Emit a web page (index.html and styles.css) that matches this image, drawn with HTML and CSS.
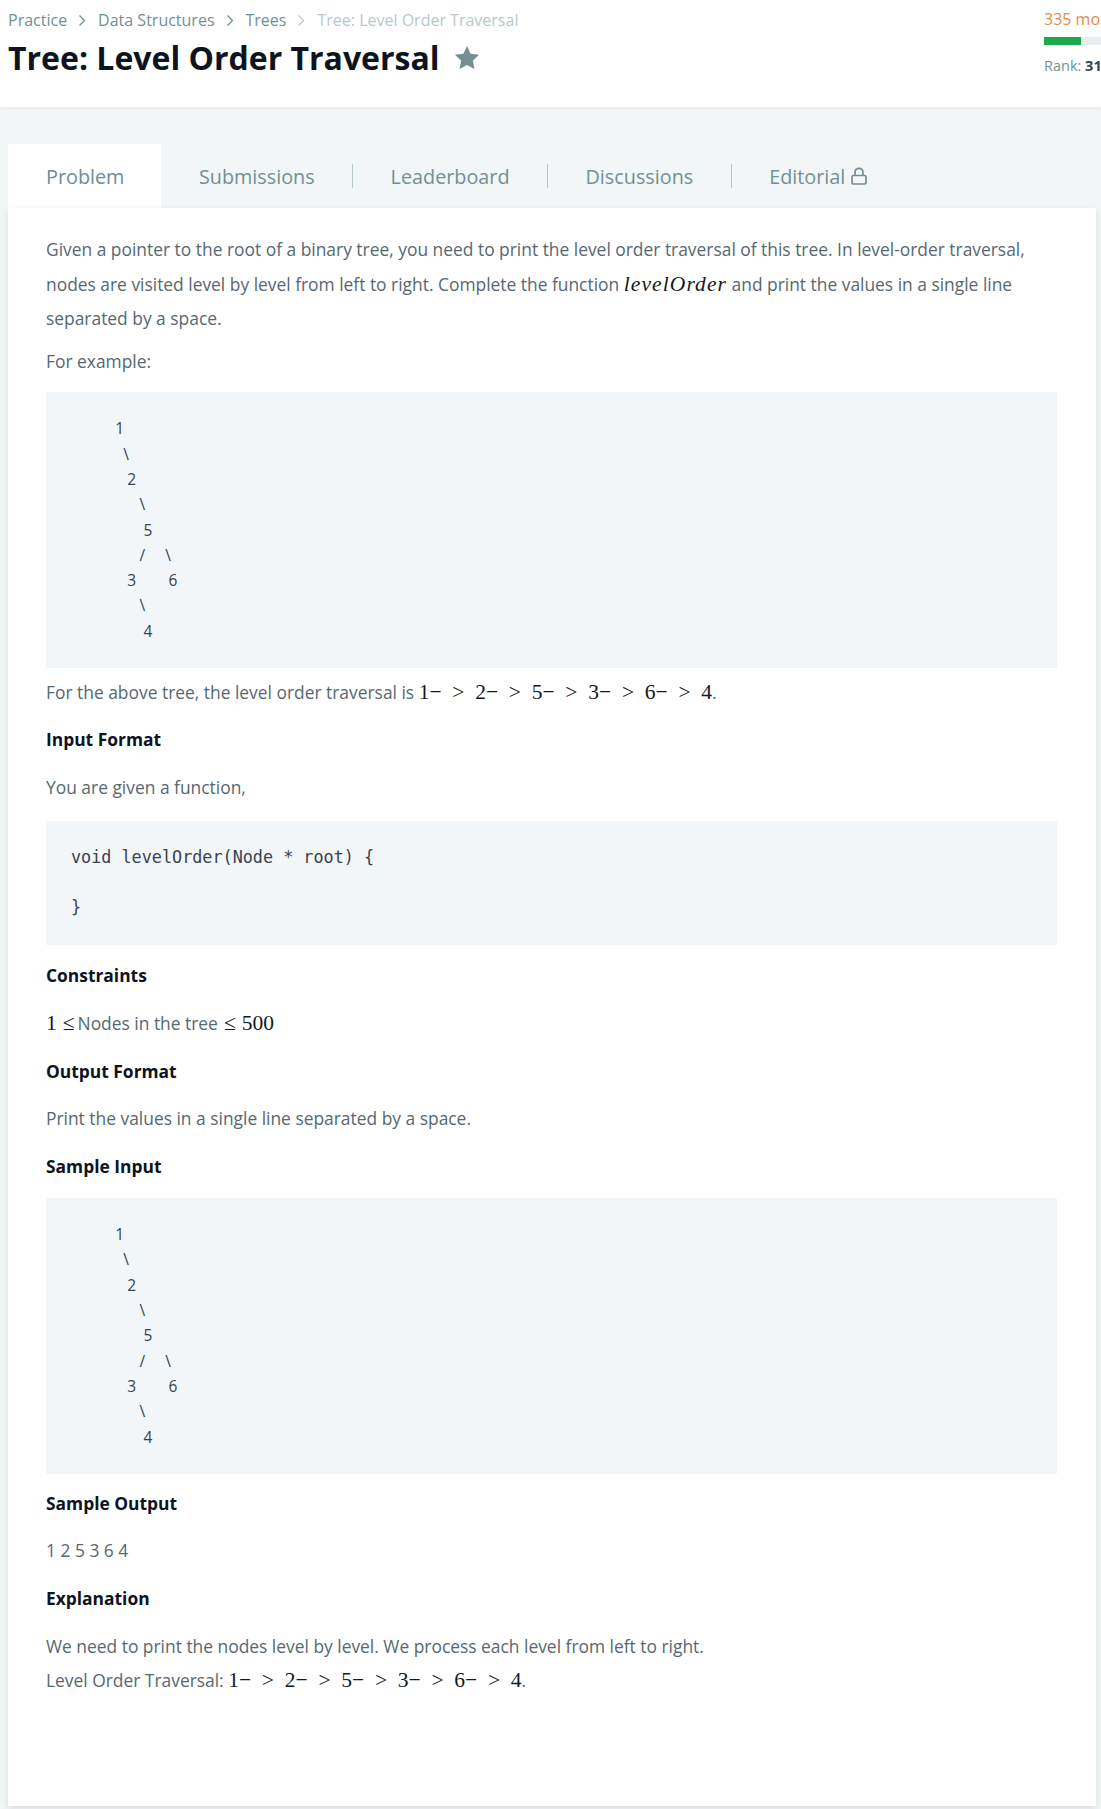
FILE: index.html
```html
<!DOCTYPE html>
<html lang="en">
<head>
<meta charset="utf-8">
<title>Tree: Level Order Traversal</title>
<link rel="stylesheet" href="styles.css">
</head>
<body>
<header class="top">
  <div class="top-left">
    <nav class="crumbs">
      <span>Practice</span>
      <svg class="chev" viewBox="0 0 8 13"><polyline points="1.5,1.5 6.5,6.5 1.5,11.5"/></svg>
      <span>Data Structures</span>
      <svg class="chev" viewBox="0 0 8 13"><polyline points="1.5,1.5 6.5,6.5 1.5,11.5"/></svg>
      <span>Trees</span>
      <svg class="chev chev-light" viewBox="0 0 8 13"><polyline points="1.5,1.5 6.5,6.5 1.5,11.5"/></svg>
      <span class="current">Tree: Level Order Traversal</span>
    </nav>
    <h1 class="title">Tree: Level Order Traversal
      <svg class="star" viewBox="0 0 24 24"><path d="M12 1.8l3.1 6.6 7.2.9-5.3 5 1.4 7.1L12 17.9l-6.4 3.5 1.4-7.1-5.3-5 7.2-.9z"/></svg>
    </h1>
  </div>
  <div class="top-right">
    <div class="points">335 more points to get your next star!</div>
    <div class="bar"><div class="bar-fill"></div></div>
    <div class="rank">Rank: <b>319375</b> | Points: 140/475</div>
  </div>
</header>

<main class="stage">
  <div class="tabs">
    <div class="tab active">Problem</div>
    <div class="tab">Submissions</div>
    <div class="tab-sep"></div>
    <div class="tab">Leaderboard</div>
    <div class="tab-sep"></div>
    <div class="tab">Discussions</div>
    <div class="tab-sep"></div>
    <div class="tab">Editorial
      <svg class="lock" viewBox="0 0 18 20"><path d="M5 9.5V6.3a4 4 0 0 1 8 0v3.2"/><rect x="2" y="9.5" width="14" height="8.5" rx="1.5"/></svg>
    </div>
  </div>

  <article class="card">
    <p>Given a pointer to the root of a binary tree, you need to print the level order traversal of this tree. In level-order traversal, nodes are visited level by level from left to right. Complete the function <span class="math mi">levelOrder</span> and print the values in a single line separated by a space.</p>
    <p class="near">For example:</p>
<pre class="block block-first tree">           1
             \
              2
                 \
                  5
                 /     \
              3        6
                 \
                  4</pre>
    <p class="after-block">For the above tree, the level order traversal is <span class="math">1−<span class="rel">&gt;</span>2−<span class="rel">&gt;</span>5−<span class="rel">&gt;</span>3−<span class="rel">&gt;</span>6−<span class="rel">&gt;</span>4</span>.</p>
    <h3>Input Format</h3>
    <p>You are given a function,</p>
<pre class="block code">void levelOrder(Node * root) {

}</pre>
    <h3>Constraints</h3>
    <p><span class="math">1<span class="le le-tight">≤</span></span>Nodes in the tree<span class="math"><span class="le">≤</span>500</span></p>
    <h3>Output Format</h3>
    <p>Print the values in a single line separated by a space.</p>
    <h3>Sample Input</h3>
<pre class="block block-last tree">           1
             \
              2
                 \
                  5
                 /     \
              3        6
                 \
                  4</pre>
    <h3>Sample Output</h3>
    <p>1 2 5 3 6 4</p>
    <h3>Explanation</h3>
    <p class="last">We need to print the nodes level by level. We process each level from left to right.<br>Level Order Traversal: <span class="math">1−<span class="rel">&gt;</span>2−<span class="rel">&gt;</span>5−<span class="rel">&gt;</span>3−<span class="rel">&gt;</span>6−<span class="rel">&gt;</span>4</span>.</p>
  </article>
</main>
</body>
</html>
```

FILE: styles.css
```css
* { box-sizing: border-box; }
html, body { margin: 0; padding: 0; }
body {
  font-family: "Open Sans", "Noto Sans", sans-serif;
  background: #f3f6f7;
  color: #576871;
  overflow-x: hidden;
}

/* ---------- header ---------- */
.top {
  background: #fff;
  height: 107px;
  display: grid;
  grid-template-columns: 1fr 57px;
  box-shadow: 0 1px 5px rgba(0, 0, 0, 0.06);
  position: relative;
  z-index: 2;
}
.top-left { padding: 8px 0 0 8px; }
.crumbs {
  display: flex;
  align-items: center;
  height: 24px;
  font-size: 16px;
  color: #738f93;
  white-space: nowrap;
}
.chev {
  width: 8px;
  height: 13px;
  margin: 0 12px 0 11px;
  fill: none;
  stroke: #738f93;
  stroke-width: 1.3;
}
.chev-light { stroke: #b7c9cc; }
.crumbs .current { color: #b7c9cc; }
.title {
  margin: 6px 0 0;
  font-size: 32px;
  line-height: 40px;
  font-weight: 700;
  color: #0e141e;
  display: flex;
  align-items: center;
  gap: 13px;
  white-space: nowrap;
}
.star { width: 28px; height: 28px; fill: #738f93; }
.top-right { padding-top: 8px; white-space: nowrap; }
.points { color: #e08f4b; font-size: 16px; line-height: 22px; }
.bar { margin-top: 7px; width: 200px; height: 8px; background: #e8edef; }
.bar-fill { width: 37px; height: 100%; background: #1ba94c; }
.rank { margin-top: 11px; font-size: 14.5px; line-height: 20px; color: #738f93; }
.rank b { color: #39424e; }

/* ---------- tabs ---------- */
.stage { padding: 37px 5px 5px 8px; }
.tabs {
  display: flex;
  align-items: center;
  height: 64px;
}
.tab {
  height: 64px;
  padding: 0 37.5px;
  display: flex;
  align-items: center;
  font-size: 19.8px;
  color: #738f93;
  white-space: nowrap;
}
.tab.active { background: #fff; color: #6f8c94; padding-right: 37px; padding-left: 38px; }
.tab-sep { width: 1px; height: 24px; background: #b7c9cc; }
.lock {
  width: 18px;
  height: 20px;
  margin-left: 5px;
  fill: none;
  stroke: #738f93;
  stroke-width: 1.7;
}

/* ---------- card ---------- */
.card {
  background: #fff;
  padding: 24px 39px 108px 38px;
  box-shadow: 0 3px 8px rgba(0, 0, 0, 0.1);
  position: relative;
  z-index: 1;
}
.card p, .card h3 {
  margin: 0 0 13px;
  font-size: 17.4px;
  line-height: 34.6px;
}
.card h3 { font-weight: 700; color: #0e141e; }
.card p.near { margin-top: -5px; }
.card p.after-block { margin-top: -7px; }
.card p.last { margin-bottom: 0; }

.block {
  margin: 16.3px 0 13.7px;
  padding: 24px 25px;
  background: #f3f6f8;
  line-height: 25.3px;
  color: #39424e;
  white-space: pre;
}
.block-first { margin-top: 14px; }
.block-last { margin-top: 14.8px; margin-bottom: 12px; }
.tree { font-family: "Open Sans", sans-serif; font-size: 15.5px; }
.code { font-family: "DejaVu Sans Mono", "Liberation Mono", monospace; font-size: 16.8px; }

.math {
  font-family: "Liberation Serif", "Times New Roman", serif;
  font-size: 21.5px;
  color: #14181f;
}
.mi { font-style: italic; letter-spacing: 1.1px; }
.rel { margin: 0 0.5em; }
.le { margin: 0 6px; }
.le-tight { margin-right: 3px; }
```
